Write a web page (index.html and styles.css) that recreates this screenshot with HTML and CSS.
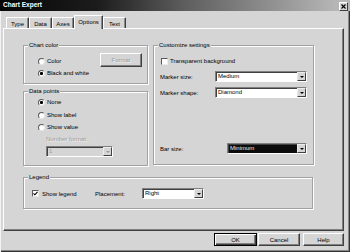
FILE: index.html
```html
<!DOCTYPE html>
<html>
<head>
<meta charset="utf-8">
<title>Chart Expert</title>
<link rel="stylesheet" href="styles.css">
</head>
<body>
<div class="window">
  <div class="titlebar">
    <span class="title">Chart Expert</span>
    <span class="close"><svg width="5" height="5" viewBox="0 0 5 5"><path d="M0.5 0.5L4.5 4.5M4.5 0.5L0.5 4.5" stroke="#000" stroke-width="1.1" fill="none"/></svg></span>
  </div>
  <div class="tabs">
    <div class="tab w23">Type</div>
    <div class="tab w23">Data</div>
    <div class="tab w22">Axes</div>
    <div class="tab sel">Options</div>
    <div class="tab w23">Text</div>
  </div>
  <div class="panel">
    <div class="cols">
      <div class="leftcol">
        <div class="group g-chart">
          <div class="cap">Chart color</div>
          <div class="chart-body">
            <div class="opts">
              <div class="opt"><span class="radio"></span>Color</div>
              <div class="opt gap4"><span class="radio on"></span>Black and white</div>
            </div>
            <div class="btn disabled fmt">Format</div>
          </div>
        </div>
        <div class="group g-data">
          <div class="cap">Data points</div>
          <div class="data-body">
            <div class="opt"><span class="radio on"></span>None</div>
            <div class="opt gap5"><span class="radio"></span>Show label</div>
            <div class="opt gap4"><span class="radio"></span>Show value</div>
            <div class="numfmt">
              <div class="dis-text">Number format:</div>
              <div class="select dis w67"><span class="val">1</span><span class="drop"><i class="arrow"></i></span></div>
            </div>
          </div>
        </div>
      </div>
      <div class="group g-custom">
        <div class="cap">Customize settings</div>
        <div class="custom-body">
          <div class="chk-row"><span class="check"></span>Transparent background</div>
          <div class="field f1"><span class="lbl w55">Marker size:</span><div class="select w92"><span class="val">Medium</span><span class="drop"><i class="arrow"></i></span></div></div>
          <div class="field f2"><span class="lbl w55">Marker shape:</span><div class="select w92"><span class="val">Diamond</span><span class="drop"><i class="arrow"></i></span></div></div>
          <div class="field f3"><span class="lbl w67">Bar size:</span><div class="select hl w80"><span class="val">Minimum</span><span class="drop"><i class="arrow"></i></span></div></div>
        </div>
      </div>
    </div>
    <div class="group g-legend">
      <div class="cap">Legend</div>
      <div class="legend-body">
        <div class="chk-wrap"><span class="check on"><svg width="5" height="5" viewBox="0 0 5 5"><path d="M0.5 2.3L1.9 3.8L4.5 0.8" stroke="#000" stroke-width="1.1" fill="none"/></svg></span>Show legend</div>
        <span class="lbl w47">Placement:</span>
        <div class="select w62"><span class="val">Right</span><span class="drop"><i class="arrow"></i></span></div>
      </div>
    </div>
  </div>
  <div class="buttons">
    <div class="btn default b-ok">OK</div>
    <div class="btn b-cancel">Cancel</div>
    <div class="btn b-help">Help</div>
  </div>
</div>
</body>
</html>
```
FILE: styles.css
```css
* { box-sizing: border-box; }
body {
  margin: 0;
  background: #d5d5d5;
  font-family: "Liberation Sans", Arial, sans-serif;
  font-size: 6px;
  color: #000;
}
.window {
  width: 350px;
  height: 252px;
  background: #d5d5d5;
  display: flex;
  flex-direction: column;
  overflow: hidden;
  box-shadow: inset 1px 0 #f2f2f2, inset -1px -1px #333, inset -2px -2px #888;
}
.titlebar {
  height: 11px;
  flex: none;
  display: flex;
  align-items: flex-start;
  justify-content: space-between;
  padding: 0 2px 0 2px;
  background: linear-gradient(90deg, #060606 0%, #1c1c1c 28%, #5c5c5c 52%, #b6b6b6 96%);
}
.title {
  color: #fff;
  font-weight: bold;
  font-size: 6.5px;
  line-height: 10px;
  margin-left: 1px;
}
.close {
  margin-top: 2px;
  width: 9px;
  height: 9px;
  background: #d5d5d5;
  border: 1px solid;
  border-color: #fff #404040 #404040 #fff;
  display: flex;
  align-items: center;
  justify-content: center;
}
.close svg { display: block; }

.tabs {
  height: 17px;
  flex: none;
  display: flex;
  align-items: flex-end;
  padding-left: 6px;
  position: relative;
  z-index: 1;
}
.tab {
  height: 11px;
  border-top: 1px solid #fff;
  border-left: 1px solid #fff;
  border-right: 1px solid #404040;
  border-top-left-radius: 1px;
  border-top-right-radius: 1px;
  box-shadow: inset -1px 0 #8a8a8a;
  display: flex;
  align-items: center;
  justify-content: center;
  line-height: 8px;
  padding-top: 1px;
}
.w22 { width: 22px; }
.w23 { width: 23px; }
.tab.sel {
  width: 29px;
  height: 14px;
  margin-bottom: -1px;
  background: #d5d5d5;
  padding-top: 0;
  padding-bottom: 2px;
}

.panel {
  flex: none;
  margin-left: 3px;
  width: 341px;
  height: 203px;
  border: 1px solid;
  border-color: #fff #404040 #404040 #fff;
  box-shadow: inset -1px -1px #808080;
  padding: 16px 0 0 19px;
}
.cols {
  display: flex;
  gap: 5px;
}
.leftcol {
  width: 125px;
  display: flex;
  flex-direction: column;
  gap: 7px;
}
.group {
  border: 1px solid #a2a2a2;
  box-shadow: inset 1px 1px #fff, 1px 1px #fff;
}
.cap {
  width: fit-content;
  height: 8px;
  line-height: 8px;
  margin: -5px 0 0 4px;
  padding: 0 1px;
  background: #d5d5d5;
}
.g-chart { height: 39px; }
.g-data { height: 75px; }
.g-custom { width: 161px; height: 120px; }
.g-legend { width: 290px; height: 32px; margin-top: 11px; }

.chart-body {
  display: flex;
  justify-content: space-between;
}
.opts { padding: 8px 0 0 14px; }
.opt {
  height: 8px;
  line-height: 8px;
  display: flex;
  align-items: center;
  white-space: nowrap;
}
.gap4 { margin-top: 4px; }
.gap5 { margin-top: 5px; }
.radio {
  width: 7px;
  height: 7px;
  margin-right: 2px;
  border-radius: 50%;
  border: 1px solid;
  border-color: #5a5a5a #e6e6e6 #e6e6e6 #5a5a5a;
  background: #fff;
  flex: none;
}
.radio.on {
  background: radial-gradient(circle, #000 0, #000 1.3px, #fff 1.8px);
}

.btn {
  height: 13px;
  display: flex;
  align-items: center;
  justify-content: center;
  background: #d5d5d5;
  border: 1px solid;
  border-color: #fff #404040 #404040 #fff;
  box-shadow: inset -1px -1px #808080;
  line-height: 8px;
}
.btn.disabled {
  color: #9c9c9c;
  text-shadow: 1px 1px #f0f0f0;
}
.fmt {
  width: 42px;
  height: 14px;
  margin: 4px 5px 0 0;
}

.data-body { padding: 3px 0 0 14px; }
.numfmt { margin: 4px 0 0 8px; }
.dis-text {
  height: 8px;
  line-height: 8px;
  color: #9c9c9c;
  text-shadow: 1px 1px #f0f0f0;
}

.select {
  height: 11px;
  display: flex;
  background: #fff;
  border: 1px solid;
  border-color: #808080 #fff #fff #808080;
  box-shadow: inset 1px 1px #404040;
  flex: none;
}
.numfmt .select { margin-top: 3px; }
.select .val {
  flex: 1;
  padding-left: 2px;
  line-height: 9px;
  white-space: nowrap;
}
.select .drop {
  width: 9px;
  height: 9px;
  background: #d5d5d5;
  border: 1px solid;
  border-color: #ececec #404040 #404040 #ececec;
  display: flex;
  align-items: center;
  justify-content: center;
}
.arrow {
  width: 0;
  height: 0;
  border-left: 2px solid transparent;
  border-right: 2px solid transparent;
  border-top: 2px solid #000;
}
.select.dis { background: #d5d5d5; }
.select.dis .val { color: #9c9c9c; }
.select.dis .arrow { border-top-color: #9c9c9c; }
.select.hl { background: #0c0c0c; }
.select.hl .val {
  color: #ededed;
}
.w67 { width: 67px; }
.w92 { width: 92px; }
.w80 { width: 80px; }
.w62 { width: 62px; }

.custom-body { padding: 8px 0 0 6px; }
.chk-row {
  height: 8px;
  line-height: 8px;
  display: flex;
  align-items: center;
}
.check {
  width: 7px;
  height: 7px;
  margin: 0 2px 0 1px;
  background: #fff;
  border: 1px solid;
  border-color: #5a5a5a #eaeaea #eaeaea #5a5a5a;
  display: flex;
  align-items: center;
  justify-content: center;
  flex: none;
}
.check svg { display: block; }
.field {
  display: flex;
  align-items: center;
  height: 11px;
}
.lbl { flex: none; white-space: nowrap; line-height: 8px; }
.w55 { width: 55px; }
.w67.lbl { width: 67px; }
.w47 { width: 47px; }
.f1 { margin-top: 6px; }
.f2 { margin-top: 5px; }
.f3 { margin-top: 45px; }

.legend-body {
  display: flex;
  align-items: center;
  height: 11px;
  margin-top: 7px;
  padding-left: 8px;
}
.chk-wrap {
  width: 63px;
  display: flex;
  align-items: center;
  line-height: 8px;
  flex: none;
}
.chk-wrap .check { margin: 0 3px 0 0; }

.buttons {
  flex: none;
  display: flex;
  justify-content: flex-end;
  margin-top: 2px;
  padding-right: 6px;
}
.btn.default {
  border-color: #000;
  box-shadow: inset 1px 1px #fff, inset -1px -1px #404040, inset -2px -2px #808080;
}
.b-ok { width: 43px; }
.b-cancel { width: 42px; margin-left: 1px; }
.b-help { width: 41px; margin-left: 3px; }
```
